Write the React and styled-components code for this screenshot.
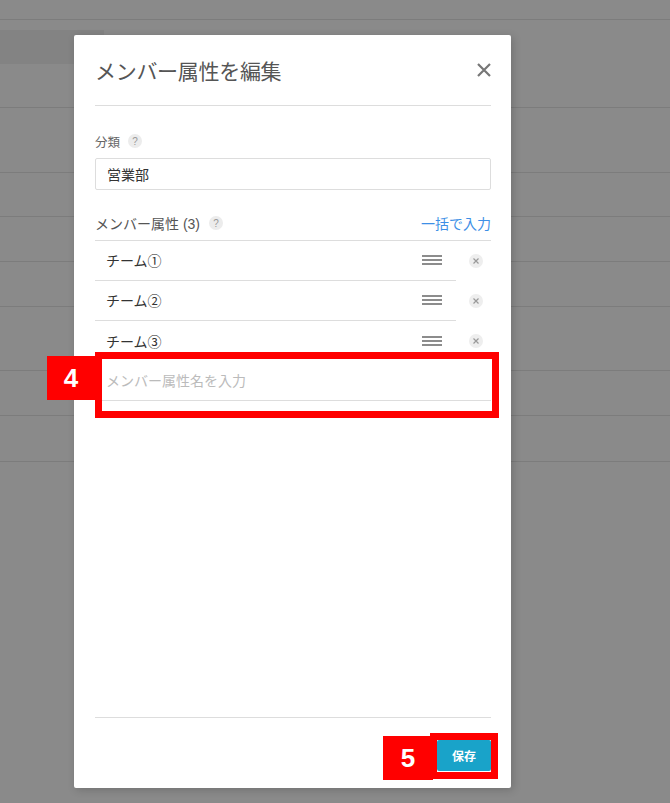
import React from 'react';
import styled, { createGlobalStyle } from 'styled-components';

const GlobalStyle = createGlobalStyle`
  html, body {
    margin: 0;
    padding: 0;
    background: #8a8a8a;
  }
  body {
    font-family: "Liberation Sans", "Noto Sans CJK JP", sans-serif;
    width: 670px;
    height: 803px;
    overflow: hidden;
  }
`;

const Page = styled.div`
  position: relative;
  width: 670px;
  height: 803px;
  background: #8a8a8a;
`;

const BgRow = styled.div`
  display: flow-root;
  box-sizing: border-box;
  height: ${(p) => p.h}px;
  border-bottom: 1px solid #7c7c7c;
`;

const BgBand = styled.div`
  margin-top: 10px;
  width: 104px;
  height: 34px;
  background: #838383;
`;

const Modal = styled.div`
  position: absolute;
  left: 74px;
  top: 35px;
  width: 437px;
  height: 753px;
  box-sizing: border-box;
  padding: 0 20px 0 21px;
  background: #fff;
  border-radius: 2px;
  box-shadow: 2px 2px 8px rgba(0, 0, 0, 0.18);
  display: flex;
  flex-direction: column;
`;

const Header = styled.div`
  box-sizing: border-box;
  height: 71px;
  border-bottom: 1px solid #ddd;
  display: flex;
  align-items: center;
  justify-content: space-between;
`;

const Title = styled.h2`
  margin: 0;
  font-size: 21px;
  font-weight: normal;
  color: #555;
  letter-spacing: -0.3px;
`;

const CloseButton = styled.button`
  border: 0;
  background: none;
  padding: 0;
  width: 14px;
  height: 14px;
  display: flex;
  cursor: pointer;
`;

const Body = styled.div`
  flex: 1;
  padding-top: 25px;
`;

const Label = styled.div`
  height: 20px;
  display: flex;
  align-items: center;
  gap: 8px;
  font-size: 12.5px;
  color: #666;
`;

const Help = styled.span`
  width: 14px;
  height: 14px;
  border-radius: 50%;
  background: #ececec;
  color: #999;
  font-size: 10px;
  font-family: "Liberation Sans", sans-serif;
  display: inline-flex;
  align-items: center;
  justify-content: center;
`;

const TextInput = styled.div`
  margin-top: 7px;
  box-sizing: border-box;
  height: 32px;
  border: 1px solid #ddd;
  border-radius: 2px;
  padding: 0 11px;
  display: flex;
  align-items: center;
  font-size: 14px;
  color: #333;
`;

const SectionHead = styled.div`
  margin-top: 20px;
  box-sizing: border-box;
  height: 31px;
  padding-bottom: 4px;
  border-bottom: 1px solid #ddd;
  display: flex;
  align-items: center;
  justify-content: space-between;
`;

const SectionTitle = styled.div`
  display: flex;
  align-items: center;
  gap: 9px;
  font-size: 14px;
  color: #555;
`;

const LinkText = styled.a`
  font-size: 14px;
  color: #3d8fe6;
  text-decoration: none;
`;

const ItemRow = styled.div`
  display: flex;
  height: 40px;
`;

const Item = styled.div`
  flex: 1;
  box-sizing: border-box;
  height: 40px;
  padding: 0 14px 1px 11px;
  border-bottom: ${(p) => (p.last ? 'none' : '1px solid #ddd')};
  display: flex;
  align-items: center;
  justify-content: space-between;
  font-size: 14px;
  color: #333;
`;

const Handle = styled.div`
  width: 20px;
  display: flex;
  flex-direction: column;
  gap: 2px;
  span {
    height: 2px;
    background: #8c8c8c;
  }
`;

const RemoveCell = styled.div`
  width: 35px;
  display: flex;
  align-items: center;
  justify-content: flex-end;
  padding-right: 8px;
  box-sizing: border-box;
`;

const RemoveButton = styled.span`
  width: 14px;
  height: 14px;
  border-radius: 50%;
  background: #eee;
  display: flex;
  align-items: center;
  justify-content: center;
`;

const NewRow = styled.div`
  position: relative;
  box-sizing: border-box;
  height: 40px;
  padding: 0 11px 2px;
  border-bottom: 1px solid #ddd;
  display: flex;
  align-items: center;
  font-size: 14px;
  color: #bbb;
`;

const Outline = styled.div`
  position: absolute;
  top: ${(p) => p.t}px;
  left: ${(p) => p.l}px;
  right: ${(p) => p.r}px;
  bottom: ${(p) => p.b}px;
  border: 7px solid #ff0000;
  pointer-events: none;
`;

const Badge = styled.div`
  position: absolute;
  top: ${(p) => p.t}px;
  left: ${(p) => p.l}px;
  width: ${(p) => p.w}px;
  height: 44px;
  background: #ff0000;
  color: #fff;
  font-family: "Liberation Sans", sans-serif;
  font-weight: bold;
  font-size: 26px;
  display: flex;
  align-items: center;
  justify-content: center;
`;

const Footer = styled.div`
  border-top: 1px solid #ddd;
  padding: 22px 0 17px;
  display: flex;
  justify-content: flex-end;
`;

const SaveWrap = styled.div`
  position: relative;
`;

const SaveButton = styled.button`
  width: 54px;
  height: 31px;
  border: 0;
  border-radius: 2px;
  background: #19a3c9;
  color: #fff;
  font-family: "Noto Sans CJK JP", sans-serif;
  font-weight: bold;
  font-size: 12px;
  cursor: pointer;
`;

const bgRows = [20, 88, 65, 44, 45, 45, 64, 45, 46];
const members = ['チーム①', 'チーム②', 'チーム③'];

const App = () => (
  <Page>
    <GlobalStyle />
    {bgRows.map((h, i) => (
      <BgRow key={i} h={h}>
        {i === 1 && <BgBand />}
      </BgRow>
    ))}
    <Modal>
      <Header>
        <Title>メンバー属性を編集</Title>
        <CloseButton aria-label="close">
          <svg width="14" height="14" viewBox="0 0 14 14">
            <path d="M1 1 L13 13 M13 1 L1 13" stroke="#777" strokeWidth="2.2" />
          </svg>
        </CloseButton>
      </Header>
      <Body>
        <Label>
          分類 <Help>?</Help>
        </Label>
        <TextInput>営業部</TextInput>
        <SectionHead>
          <SectionTitle>
            メンバー属性 (3) <Help>?</Help>
          </SectionTitle>
          <LinkText href="#">一括で入力</LinkText>
        </SectionHead>
        {members.map((m, i) => (
          <ItemRow key={m}>
            <Item last={i === members.length - 1}>
              {m}
              <Handle>
                <span />
                <span />
                <span />
              </Handle>
            </Item>
            <RemoveCell>
              <RemoveButton>
                <svg width="6" height="6" viewBox="0 0 6 6">
                  <path d="M0.5 0.5 L5.5 5.5 M5.5 0.5 L0.5 5.5" stroke="#999" strokeWidth="1.2" />
                </svg>
              </RemoveButton>
            </RemoveCell>
          </ItemRow>
        ))}
        <NewRow>
          メンバー属性名を入力
          <Outline t={-9} l={0} r={-8} b={-18} />
          <Badge t={-5} l={-48} w={48}>4</Badge>
        </NewRow>
      </Body>
      <Footer>
        <SaveWrap>
          <SaveButton>保存</SaveButton>
          <Outline t={-7} l={-7} r={-7} b={-8} />
          <Badge t={-4} l={-54} w={50}>5</Badge>
        </SaveWrap>
      </Footer>
    </Modal>
  </Page>
);

export default App;
